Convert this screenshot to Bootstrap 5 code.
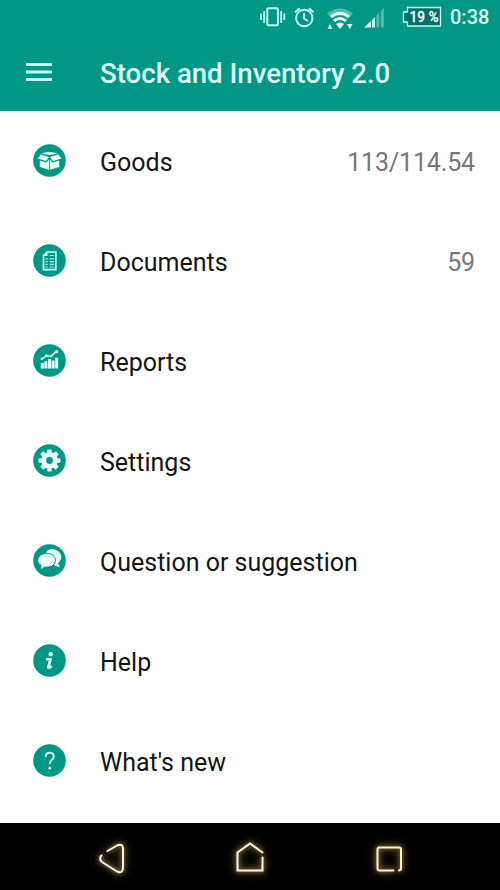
<!DOCTYPE html>
<html lang="en">
<head>
<meta charset="utf-8">
<meta name="viewport" content="width=device-width, initial-scale=1">
<title>Stock and Inventory 2.0</title>
<link href="https://cdn.jsdelivr.net/npm/bootstrap@5.3.0/dist/css/bootstrap.min.css" rel="stylesheet">
<style>
:root{--teal:#009785;--ice:#dcfffb}
body{font-family:Roboto,"Liberation Sans",sans-serif;background:#fff}
svg{display:block;flex:none}
.screen{width:500px;height:890px;overflow:hidden}
.top-area{background:var(--teal);color:var(--ice)}
.status{height:34px;padding-right:11px}
.status svg{height:34px}
.clock{font-size:20px;font-weight:500;line-height:35px;width:39px;margin-left:8px;white-space:nowrap}
.app-bar{height:77px;padding-left:25px}
.app-title{font-size:27.6px;font-weight:500;line-height:1;margin:0 0 0 47px;padding-top:3px;white-space:nowrap}
.menu-row{height:100px;padding:0 25px 0 33px;font-size:25px;line-height:1;color:#151515}
.menu-row svg{margin-bottom:1px}
.menu-label{margin-left:34px;padding-top:3px}
.menu-count{color:#777;padding-top:3px;letter-spacing:-.15px}
.disc{fill:var(--teal)}
.glyph{fill:#e6fffb}
.nav-keys{height:67px;gap:99px;background:#000;padding-top:2px}
.nav-keys svg{overflow:visible;filter:drop-shadow(0 0 2px #a58c5c) drop-shadow(0 0 4px #776035)}
</style>
</head>
<body>
<div class="screen d-flex flex-column">
  <header class="top-area">
    <div class="status d-flex justify-content-end align-items-center">
      <svg width="32" viewBox="258 0 32 34" fill="none" stroke="#b9fff3" stroke-width="2"><rect x="267.300" y="8.300" width="10.600" height="17" rx="1"/><path d="M264.200 11v12M281.200 11v12M261 13.500v6.500M284.300 13.500v6.500" stroke-width="1.800"/></svg>
      <svg width="33" viewBox="290 0 33 34" fill="none" stroke="#c9fff7" stroke-width="1.900"><circle cx="304.300" cy="18" r="8.200"/><path d="M304 13v5.500l4 2.500M295 12.300l4.700-4M313.600 12.300l-4.700-4"/></svg>
      <svg width="36" viewBox="323 0 36 34"><path d="M327 13.500Q340 3.500 353 13.500L350 17Q340 9.500 330 17Z" fill="#4fb9aa"/><g fill="none" stroke="#e0fffb" stroke-width="3"><path d="M331 17Q340 9.700 349 17M334 21Q340 16 346 21"/></g><path d="M336 24Q340 21 344 24L340 29Z" fill="#e0fffb"/><path d="M327.500 29l2.500-5 2.500 5zM347 24h5.500l-2.700 5z" fill="#e0fffb"/></svg>
      <svg width="41" viewBox="359 0 41 34"><path d="M364 27.500L371 21v6.500zM372 20l3-3v10.500h-3z" fill="#c9fff7"/><path d="M376.300 15.500l3-3v15h-3zM380.700 11l3.300-3.500v20h-3.300z" fill="#4fb5a6"/></svg>
      <svg width="42" viewBox="400 0 42 34"><path d="M407.500 7.500H440.500V26H407.500V22H403.500V12H407.500Z" fill="#086f63" stroke="#c3fff5" stroke-width="1.300"/><text x="409.500" y="21.800" font-size="14.500" font-weight="500" fill="#e8fffb" stroke="#e8fffb" stroke-width=".3" textLength="29" lengthAdjust="spacingAndGlyphs">19 %</text></svg>
      <span class="clock">0:38</span>
    </div>
    <div class="app-bar d-flex align-items-center">
      <svg width="28" height="21" viewBox="0 0 28 21" fill="#c9fff7"><path d="M1 1h26v3H1zM1 8.500h26v3H1zM1 16h26v3H1z"/></svg>
      <h1 class="app-title">Stock and Inventory 2.0</h1>
    </div>
  </header>

  <main class="flex-grow-1">
    <div class="menu-row d-flex align-items-center">
      <svg width="33" height="33" viewBox="0 0 33 33"><circle class="disc" cx="16.500" cy="16.500" r="16.300"/><g class="glyph"><path d="M8 9.500l7.500-1.800 1 .8 1-.8L25 9.500l-8.500 1.500z"/><path d="M7.800 10.500l8.200 2.600-2.900 4-8.600-2.700zM25.200 10.500L17 13.100l2.900 4 8.600-2.700z"/><path d="M6.800 16.400l6.900 2.200 2.400-3.300v10.400l-9.300-2.600zM26.200 16.400l-6.900 2.200-2.400-3.300v10.400l9.300-2.600z"/></g></svg>
      <span class="menu-label">Goods</span><span class="menu-count ms-auto">113/114.54</span>
    </div>
    <div class="menu-row d-flex align-items-center">
      <svg width="33" height="33" viewBox="0 0 33 33"><circle class="disc" cx="16.500" cy="16.500" r="16.300"/><path d="M14 8h8.800v17.700H10.500V11.500z" fill="none" stroke="#d6fff9" stroke-width="1.700"/><path d="M10 12l4.500-4.500V12z" class="glyph"/><path d="M16.500 11.500h4.500M12.500 14.800h2.200M16.500 14.800h4.500M12.500 17.600h2.200M16.500 17.600h4.500M12.500 20.400h2.200M16.500 20.400h4.500M12.500 23h2.200M16.500 23h4.500" stroke="#b3eee5" stroke-width="1.200"/></svg>
      <span class="menu-label">Documents</span><span class="menu-count ms-auto">59</span>
    </div>
    <div class="menu-row d-flex align-items-center">
      <svg width="33" height="33" viewBox="0 0 33 33"><circle class="disc" cx="16.500" cy="16.500" r="16.300"/><path class="glyph" d="M7.800 19h3v5.500h-3zM11.400 17.200h3v7.300h-3zM15 15h3v9.500h-3zM18.600 16.500h3v8h-3zM22.200 13.800h3v10.700h-3z"/><path d="M9 15l4.400-3.300 4.300.8 5.800-5" fill="none" stroke="#d6fff9" stroke-width="1.500"/><g class="glyph"><circle cx="9" cy="14.800" r="1.400"/><circle cx="13.400" cy="11.700" r="1.400"/><circle cx="17.700" cy="12.200" r="1.400"/><circle cx="23.600" cy="7.600" r="1.600"/></g></svg>
      <span class="menu-label">Reports</span>
    </div>
    <div class="menu-row d-flex align-items-center">
      <svg width="33" height="33" viewBox="0 0 33 33"><circle class="disc" cx="16.500" cy="16.500" r="16.300"/><g class="glyph" transform="translate(16.500 16.500)"><circle r="8.200"/><path id="tooth" d="M-2.600-7L-2-11H2L2.600-7V7L2 11H-2L-2.600 7z"/><use href="#tooth" transform="rotate(45)"/><use href="#tooth" transform="rotate(90)"/><use href="#tooth" transform="rotate(135)"/></g><circle class="disc" cx="16.500" cy="16.500" r="3.400"/></svg>
      <span class="menu-label">Settings</span>
    </div>
    <div class="menu-row d-flex align-items-center">
      <svg width="33" height="33" viewBox="0 0 33 33"><circle class="disc" cx="16.500" cy="16.500" r="16.300"/><path class="glyph" d="M12.500 9.500C17-1.500 36 10 25 19.200L27 23.500 20.500 21H17z"/><path d="M13.800 9.300c4.900 0 8.700 3 8.700 6.900s-3.800 6.900-8.700 6.900l-2-.2-4.300 3.500.5-5C6 20.200 4.800 18.300 4.800 16.200c0-3.900 4.100-6.900 9-6.900z" class="glyph" stroke="#009785" stroke-width="1"/></svg>
      <span class="menu-label">Question or suggestion</span>
    </div>
    <div class="menu-row d-flex align-items-center">
      <svg width="33" height="33" viewBox="0 0 33 33"><circle class="disc" cx="16.500" cy="16.500" r="16.300"/><circle class="glyph" cx="17.700" cy="10.200" r="2.200"/><path d="M13 15.300h4.500l-2.300 8.300q1.800.3 3.400-1.400" fill="none" stroke="#e6fffb" stroke-width="2.600" stroke-linejoin="round"/></svg>
      <span class="menu-label">Help</span>
    </div>
    <div class="menu-row d-flex align-items-center">
      <svg width="33" height="33" viewBox="0 0 33 33"><circle class="disc" cx="16.500" cy="16.500" r="16.300"/><path d="M12.700 12.800c0-5.400 8.100-5.400 8.100-.4 0 3.400-4.100 3.500-4.100 7.600" fill="none" stroke="#d6fff9" stroke-width="1.900"/><circle class="glyph" cx="16.700" cy="23.900" r="1.500"/></svg>
      <span class="menu-label">What's new</span>
    </div>
  </main>

  <nav class="nav-keys d-flex align-items-center justify-content-center">
    <svg width="40" height="40" viewBox="91 838 40 40" fill="none" stroke="#fff5df" stroke-width="2" stroke-linecap="round" stroke-linejoin="round"><path d="M107.500 851L117 845.500Q122.500 843 123 848V868Q122.500 874 117 871.500L102 862Q98.500 859 101.500 855.500"/></svg>
    <svg width="40" height="40" viewBox="230 838 40 40" fill="none" stroke="#fff5df" stroke-width="2" stroke-linecap="round"><path d="M262.500 852.500L250 843.500L237.500 852.500V870.500H262.500V857.500"/></svg>
    <svg width="40" height="40" viewBox="369 838 40 40" fill="none" stroke="#fff0cd" stroke-width="2" stroke-linecap="round"><path d="M393.500 870.500H379.500Q377.500 870.500 377.500 868.500V849.500Q377.500 847.500 379.500 847.500H399Q401 847.500 401 849.500V868.500Q401 870 399 870.500"/></svg>
  </nav>
</div>
<script src="https://cdn.jsdelivr.net/npm/bootstrap@5.3.0/dist/js/bootstrap.bundle.min.js"></script>
</body>
</html>
